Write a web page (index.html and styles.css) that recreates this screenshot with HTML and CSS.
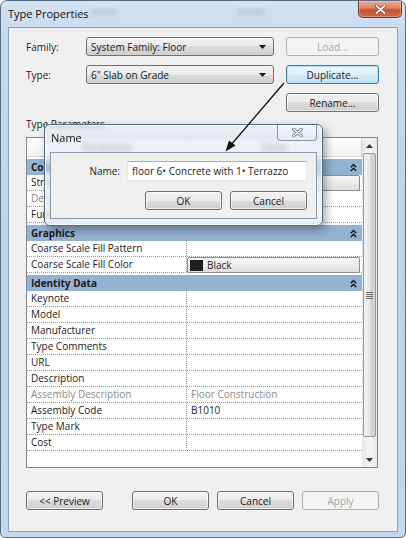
FILE: index.html
```html
<!DOCTYPE html>
<html>
<head>
<meta charset="utf-8">
<title>Type Properties</title>
<link rel="stylesheet" href="styles.css">
</head>
<body>
<div class="window">
  <div class="titlebar">
    <span class="title">Type Properties</span>
    <span class="ghost ghost-a"></span>
    <span class="ghost ghost-b"></span>
    <div class="close">
      <svg width="11" height="9" viewBox="0 0 11 9"><path d="M1.5 1 L9.5 8 M9.5 1 L1.5 8" stroke="#7a3a2a" stroke-width="3.2" stroke-linecap="round"/><path d="M1.5 1 L9.5 8 M9.5 1 L1.5 8" stroke="#fff" stroke-width="1.8" stroke-linecap="round"/></svg>
    </div>
  </div>
  <div class="client">
    <div class="topgrid">
      <span class="lbl">Family:</span>
      <div class="combo"><span>System Family: Floor</span><svg class="drop" width="7" height="4" viewBox="0 0 7 4"><path d="M0 0 H7 L3.5 4 Z" fill="#1a1a1a"/></svg></div>
      <div class="btn disabled">Load...</div>
      <span class="lbl">Type:</span>
      <div class="combo"><span>6" Slab on Grade</span><svg class="drop" width="7" height="4" viewBox="0 0 7 4"><path d="M0 0 H7 L3.5 4 Z" fill="#1a1a1a"/></svg></div>
      <div class="btn focused">Duplicate...</div>
      <div class="btn rename">Rename...</div>
    </div>
    <div class="section-label">Type Parameters</div>
    <div class="table">
      <div class="grid">
        <div class="thead"><div class="th">Parameter</div><div class="th">Value</div></div>
        <div class="group"><span>Construction</span><svg class="chev" width="7" height="9" viewBox="0 0 7 9"><path d="M0.8 4.2 L3.5 1.5 L6.2 4.2 M0.8 8 L3.5 5.3 L6.2 8" stroke="#1a1a1a" stroke-width="1.5" fill="none"/></svg></div>
        <div class="row"><div class="c1">Structure</div><div class="c2"><div class="vbtn"></div></div></div>
        <div class="row muted"><div class="c1">Default Thickness</div><div class="c2"></div></div>
        <div class="row"><div class="c1">Function</div><div class="c2"></div></div>
        <div class="group"><span>Graphics</span><svg class="chev" width="7" height="9" viewBox="0 0 7 9"><path d="M0.8 4.2 L3.5 1.5 L6.2 4.2 M0.8 8 L3.5 5.3 L6.2 8" stroke="#1a1a1a" stroke-width="1.5" fill="none"/></svg></div>
        <div class="row"><div class="c1">Coarse Scale Fill Pattern</div><div class="c2"></div></div>
        <div class="row"><div class="c1">Coarse Scale Fill Color</div><div class="c2"><div class="vbtn"><span class="swatch"></span><span>Black</span></div></div></div>
        <div class="group"><span>Identity Data</span><svg class="chev" width="7" height="9" viewBox="0 0 7 9"><path d="M0.8 4.2 L3.5 1.5 L6.2 4.2 M0.8 8 L3.5 5.3 L6.2 8" stroke="#1a1a1a" stroke-width="1.5" fill="none"/></svg></div>
        <div class="row"><div class="c1">Keynote</div><div class="c2"></div></div>
        <div class="row"><div class="c1">Model</div><div class="c2"></div></div>
        <div class="row"><div class="c1">Manufacturer</div><div class="c2"></div></div>
        <div class="row"><div class="c1">Type Comments</div><div class="c2"></div></div>
        <div class="row"><div class="c1">URL</div><div class="c2"></div></div>
        <div class="row"><div class="c1">Description</div><div class="c2"></div></div>
        <div class="row muted"><div class="c1">Assembly Description</div><div class="c2">Floor Construction</div></div>
        <div class="row"><div class="c1">Assembly Code</div><div class="c2">B1010</div></div>
        <div class="row"><div class="c1">Type Mark</div><div class="c2"></div></div>
        <div class="row"><div class="c1">Cost</div><div class="c2"></div></div>
      </div>
      <div class="scrollbar">
        <div class="sb-arrow"><svg width="7" height="4" viewBox="0 0 7 4"><path d="M0 4 H7 L3.5 0 Z" fill="#333"/></svg></div>
        <div class="thumb"><span class="grip"></span></div>
        <div class="track"></div>
        <div class="sb-arrow"><svg width="7" height="4" viewBox="0 0 7 4"><path d="M0 0 H7 L3.5 4 Z" fill="#333"/></svg></div>
      </div>
    </div>
    <div class="bottom">
      <div class="btn preview">&lt;&lt; Preview</div>
      <div class="btn ok">OK</div>
      <div class="btn">Cancel</div>
      <div class="btn disabled">Apply</div>
    </div>
  </div>
</div>

<div class="dialog">
  <div class="dtitle">
    <span>Name</span>
    <div class="dclose"><svg width="11" height="9" viewBox="0 0 11 9"><path d="M1.5 1 L9.5 8 M9.5 1 L1.5 8" stroke="#6f7a86" stroke-width="3" stroke-linecap="round"/><path d="M1.5 1 L9.5 8 M9.5 1 L1.5 8" stroke="#f4f6f8" stroke-width="1.4" stroke-linecap="round"/></svg></div>
  </div>
  <div class="dcontent">
    <div class="name-row">
      <span class="lbl">Name:</span>
      <div class="input">floor 6• Concrete with 1• Terrazzo</div>
    </div>
    <div class="dbuttons">
      <div class="btn">OK</div>
      <div class="btn">Cancel</div>
    </div>
  </div>
</div>

<svg class="arrow" width="406" height="538" viewBox="0 0 406 538">
  <line x1="284" y1="83" x2="230" y2="146" stroke="#111" stroke-width="1.3"/>
  <polygon points="225.5,151.5 235.5,145.5 229,140.5" fill="#111"/>
</svg>
</body>
</html>
```

FILE: styles.css
```css
* { box-sizing: border-box; }
html, body { margin: 0; padding: 0; }
body {
  position: relative;
  width: 406px;
  height: 538px;
  overflow: hidden;
  background: #fff;
  font-family: "Segoe UI", "Open Sans", "Liberation Sans", sans-serif;
  font-size: 10px;
  color: #1b1b1b;
}

/* main window frame */
.window {
  width: 406px;
  height: 538px;
  border: 1px solid #5a6d82;
  border-radius: 7px 7px 5px 5px;
  background: linear-gradient(180deg, #d3e3f3 0px, #c6d9ed 40px, #bed4ea 300px, #c3d8ed 100%);
  display: flex;
  flex-direction: column;
  overflow: hidden;
}
.titlebar {
  height: 26px;
  flex: none;
  display: flex;
  align-items: flex-start;
  padding-left: 7px;
  position: relative;
}
.title {
  line-height: 26px;
  font-size: 11px;
  flex: 1;
  color: #111;
}
.ghost {
  position: absolute;
  top: 8px;
  height: 6px;
  border-radius: 3px;
  background: rgba(120, 140, 170, 0.25);
  filter: blur(2px);
}
.ghost-a { left: 90px; width: 26px; }
.ghost-b { left: 236px; width: 28px; }
.close {
  width: 44px;
  height: 17px;
  margin-right: 3px;
  border: 1px solid #7a3524;
  border-top: none;
  border-radius: 0 0 5px 5px;
  background: linear-gradient(180deg, #e9ad98 0%, #d98366 45%, #c5502f 55%, #d2694a 100%);
  display: flex;
  align-items: center;
  justify-content: center;
  box-shadow: inset 0 0 0 1px rgba(255, 220, 200, 0.35);
}

.client {
  flex: 1;
  margin: 0 7px 5px 7px;
  background: #f0f0f0;
  border: 1px solid #8ea2b8;
  padding: 9px 0 0 17px;
  display: flex;
  flex-direction: column;
}

/* top controls */
.topgrid {
  display: grid;
  grid-template-columns: 60px 200px 93px;
  grid-auto-rows: 19px;
  row-gap: 9px;
}
.lbl {
  align-self: center;
}
.combo {
  width: 188px;
  height: 19px;
  border: 1px solid #707070;
  border-radius: 3px;
  background: linear-gradient(180deg, #f2f2f2 0%, #ebebeb 50%, #dddddd 50%, #cfcfcf 100%);
  display: flex;
  align-items: center;
  justify-content: space-between;
  padding: 0 7px 0 4px;
}
.btn {
  height: 19px;
  border: 1px solid #707070;
  border-radius: 3px;
  background: linear-gradient(180deg, #f2f2f2 0%, #ebebeb 50%, #dddddd 50%, #cfcfcf 100%);
  display: flex;
  align-items: center;
  justify-content: center;
  box-shadow: inset 0 0 0 1px rgba(255, 255, 255, 0.6);
}
.btn.disabled {
  border-color: #adb2b5;
  background: #f4f4f4;
  color: #a3a3a3;
  box-shadow: none;
}
.btn.focused {
  border-color: #3c7fb1;
  box-shadow: inset 0 0 0 1px #aee1f7;
  background: linear-gradient(180deg, #eaf6fd 0%, #e2f1fa 50%, #d3eaf7 50%, #c6e3f5 100%);
}
.btn.rename { grid-column: 3; }

.section-label {
  margin-top: 5px;
  line-height: 14px;
}

/* parameter table */
.table {
  margin-top: 6px;
  width: 352px;
  height: 331px;
  border: 1px solid #828790;
  background: #fff;
  display: flex;
}
.grid {
  flex: 1;
  display: flex;
  flex-direction: column;
}
.thead {
  height: 19px;
  flex: none;
  display: grid;
  grid-template-columns: 160px 1fr;
  background: linear-gradient(180deg, #ffffff, #f2f3f5);
  border-bottom: 1px solid #d5d5d5;
  border-right: 1px solid #d5d5d5;
}
.th {
  display: flex;
  align-items: center;
  justify-content: center;
  color: #333;
}
.th + .th { border-left: 1px solid #e3e3e3; }
.group {
  height: 18px;
  flex: none;
  border-top: 2px solid #fff;
  background: #94b3d2;
  font-weight: bold;
  display: flex;
  align-items: center;
  justify-content: space-between;
  padding: 0 4px 0 4px;
}
.chev { margin-right: 1px; }
.row {
  height: 16px;
  flex: none;
  display: grid;
  grid-template-columns: 160px 1fr;
  border-bottom: 1px dotted #9a9a9a;
}
.c1 {
  border-right: 1px dotted #9a9a9a;
  padding-left: 4px;
  line-height: 15px;
  white-space: nowrap;
  overflow: hidden;
}
.c2 {
  padding-left: 4px;
  line-height: 15px;
  position: relative;
}
.row.muted { color: #8c8c8c; }
.vbtn {
  position: absolute;
  left: 0;
  top: 0;
  width: 173px;
  height: 16px;
  border: 1px solid #8d8d8d;
  border-radius: 2px;
  background: linear-gradient(180deg, #f6f6f6 0%, #ececec 50%, #e0e0e0 100%);
  display: flex;
  align-items: center;
  padding-left: 2px;
}
.swatch {
  width: 13px;
  height: 11px;
  background: #1c1e22;
  margin-right: 4px;
}

/* scrollbar */
.scrollbar {
  width: 15px;
  flex: none;
  display: flex;
  flex-direction: column;
  background: linear-gradient(90deg, #e6e6e6, #f3f3f3 40%, #f3f3f3 60%, #e6e6e6);
}
.sb-arrow {
  height: 15px;
  flex: none;
  display: flex;
  align-items: center;
  justify-content: center;
}
.thumb {
  height: 284px;
  flex: none;
  margin: 0 1px;
  border: 1px solid #999;
  border-radius: 2px;
  background: linear-gradient(90deg, #f4f4f4, #e8e8e8 50%, #d6d6d6 51%, #d0d0d0);
  display: flex;
  align-items: center;
  justify-content: center;
}
.grip {
  width: 7px;
  height: 7px;
  background: repeating-linear-gradient(180deg, #707070 0, #707070 1px, transparent 1px, transparent 2px);
}
.track { flex: 1; }

/* bottom buttons */
.bottom {
  margin-top: 23px;
  display: flex;
  gap: 8px;
}
.bottom .btn { width: 77px; }
.bottom .btn.ok { margin-left: 21px; }

/* Name dialog overlay */
.dialog {
  position: absolute;
  left: 44px;
  top: 124px;
  width: 279px;
  height: 102px;
  border: 1px solid #5b6a7b;
  border-radius: 6px;
  background: rgba(226, 236, 246, 0.6);
  backdrop-filter: blur(2.5px);
  box-shadow: 3px 4px 10px rgba(0, 0, 0, 0.35), inset 0 0 0 1px rgba(255, 255, 255, 0.75);
  display: flex;
  flex-direction: column;
  padding: 0 5px 6px 5px;
}
.dtitle {
  height: 27px;
  flex: none;
  display: flex;
  align-items: flex-start;
  justify-content: space-between;
}
.dtitle span {
  line-height: 25px;
  font-size: 11px;
  padding-left: 1px;
  color: #111;
}
.dclose {
  width: 40px;
  height: 16px;
  border: 1px solid #8a96a4;
  border-top: none;
  border-radius: 0 0 4px 4px;
  background: linear-gradient(180deg, rgba(250, 252, 254, 0.7), rgba(226, 234, 242, 0.7));
  display: flex;
  align-items: center;
  justify-content: center;
}
.dcontent {
  flex: 1;
  background: #f0f0f0;
  border: 1px solid #8c9bad;
  padding: 8px 9px 0 0;
}
.name-row {
  display: flex;
  justify-content: flex-end;
  align-items: center;
  gap: 7px;
}
.input {
  width: 180px;
  height: 20px;
  background: #fff;
  border: 1px solid #e3e9ef;
  border-top-color: #abadb3;
  display: flex;
  align-items: center;
  padding-left: 4px;
}
.dbuttons {
  margin-top: 10px;
  display: flex;
  justify-content: flex-end;
  gap: 8px;
}
.dbuttons .btn { width: 77px; }

.arrow {
  position: absolute;
  left: 0;
  top: 0;
  pointer-events: none;
}
```
